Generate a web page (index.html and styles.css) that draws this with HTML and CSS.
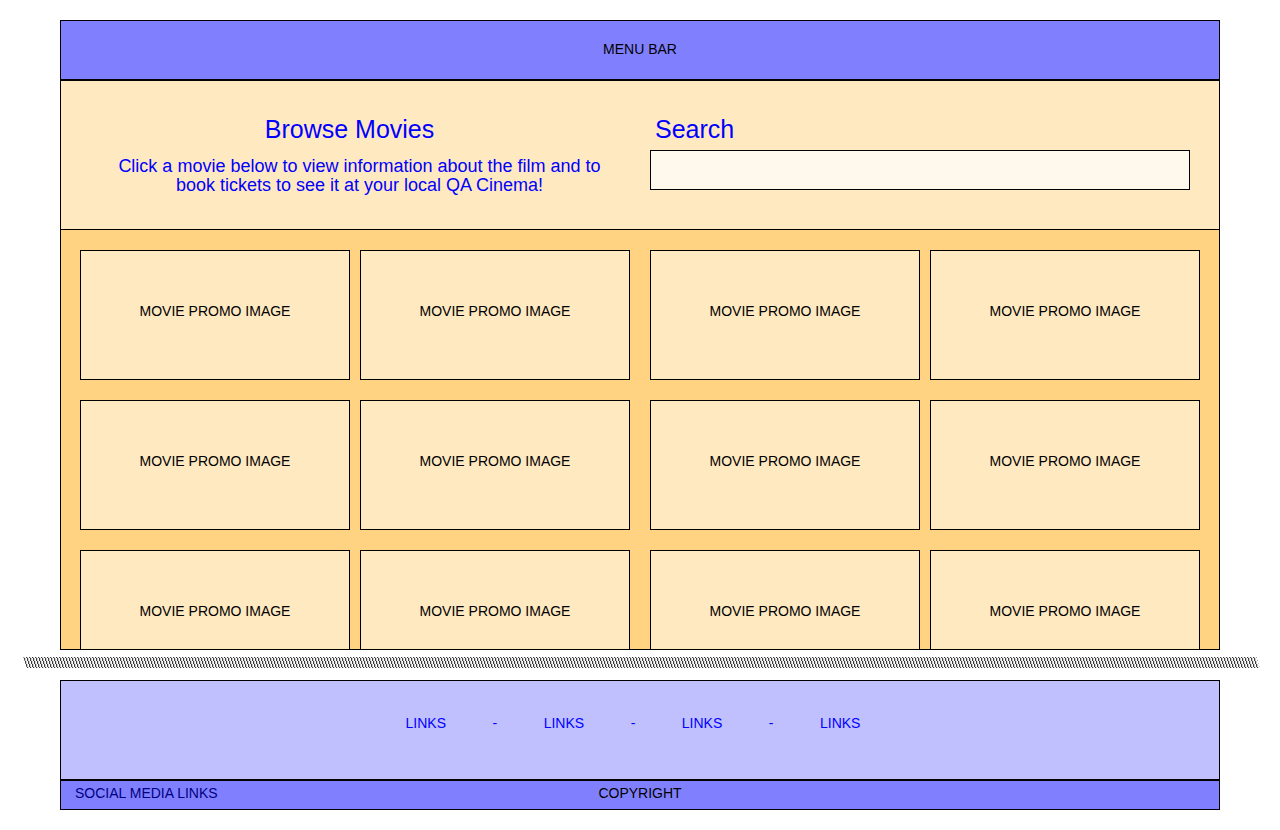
FILE: index.html
```html
<!DOCTYPE html>
<html>
<head>
<meta charset="utf-8">
<title>Browse Movies</title>
<link rel="stylesheet" href="styles.css">
</head>
<body>
<div class="page">
  <div class="menu-bar">MENU BAR</div>
  <div class="header">
    <div class="browse">
      <h1 class="browse-title">Browse Movies</h1>
      <p class="browse-text">Click a movie below to view information about the film and to<br>book tickets to see it at your local QA Cinema!</p>
    </div>
    <div class="search">
      <h2 class="search-title">Search</h2>
      <div class="search-box"></div>
    </div>
  </div>
  <div class="movies">
    <div class="movie-grid">
      <div class="card">MOVIE PROMO IMAGE</div>
      <div class="card">MOVIE PROMO IMAGE</div>
      <div class="card">MOVIE PROMO IMAGE</div>
      <div class="card">MOVIE PROMO IMAGE</div>
      <div class="card">MOVIE PROMO IMAGE</div>
      <div class="card">MOVIE PROMO IMAGE</div>
      <div class="card">MOVIE PROMO IMAGE</div>
      <div class="card">MOVIE PROMO IMAGE</div>
      <div class="card">MOVIE PROMO IMAGE</div>
      <div class="card">MOVIE PROMO IMAGE</div>
      <div class="card">MOVIE PROMO IMAGE</div>
      <div class="card">MOVIE PROMO IMAGE</div>
    </div>
  </div>
  <div class="page-break"><div class="zigzag"></div></div>
  <div class="footer-links">
    <span class="link">LINKS</span><span class="sep">-</span>
    <span class="link">LINKS</span><span class="sep">-</span>
    <span class="link">LINKS</span><span class="sep">-</span>
    <span class="link">LINKS</span>
  </div>
  <div class="footer-bar">
    <span class="social">SOCIAL MEDIA LINKS</span>
    <span class="copyright">COPYRIGHT</span>
  </div>
</div>
</body>
</html>
```
FILE: styles.css
```css
html, body {
  margin: 0;
  padding: 0;
  background: #ffffff;
}

body {
  font-family: "Liberation Sans", Arial, sans-serif;
  font-size: 14px;
  color: #000000;
}

.page {
  width: 1160px;
  margin: 20px 0 0 60px;
}

.menu-bar {
  box-sizing: border-box;
  height: 61px;
  border: 1px solid #000;
  border-bottom-width: 2px;
  background: #8080ff;
  display: flex;
  align-items: center;
  justify-content: center;
  padding-bottom: 2px;
}

.header {
  box-sizing: border-box;
  height: 149px;
  border-left: 1px solid #000;
  border-right: 1px solid #000;
  border-bottom: 1px solid #000;
  background: #ffe9c1;
  display: flex;
  padding-top: 33px;
}

.browse {
  width: 577px;
  color: #0000ff;
}

.browse-title {
  margin: 0;
  font-size: 25px;
  font-weight: normal;
  line-height: 30px;
  text-align: center;
}

.browse-text {
  margin: 13px 0 0 0;
  padding-left: 20px;
  font-size: 18px;
  line-height: 19px;
  text-align: center;
}

.search {
  padding-left: 12px;
  color: #0000ff;
}

.search-title {
  margin: 0 0 0 5px;
  font-size: 25px;
  font-weight: normal;
  line-height: 30px;
}

.search-box {
  box-sizing: border-box;
  margin-top: 6px;
  width: 540px;
  height: 40px;
  border: 1px solid #000;
  background: #fff8ec;
}

.movies {
  box-sizing: border-box;
  height: 420px;
  border-left: 1px solid #000;
  border-right: 1px solid #000;
  border-bottom: 1px solid #000;
  background: #ffd382;
  padding: 20px 19px 0 19px;
  overflow: hidden;
}

.movie-grid {
  display: grid;
  grid-template-columns: 270px 270px 280px 270px;
  grid-auto-rows: 130px;
  column-gap: 10px;
  row-gap: 20px;
}

.card {
  box-sizing: border-box;
  width: 270px;
  border: 1px solid #000;
  background: #ffe9c1;
  display: flex;
  align-items: center;
  justify-content: center;
  padding-bottom: 8px;
}

.card:nth-child(4n+3) {
  justify-self: end;
}

.page-break {
  height: 30px;
  margin-left: -35px;
  width: 1233px;
  padding-top: 7px;
  box-sizing: border-box;
}

.zigzag {
  height: 11px;
  background: repeating-linear-gradient(90deg, #3c3c3c 0 1px, rgba(60,60,60,0.25) 1px 2px, transparent 2px 3px);
  transform: skewX(17deg);
}

.footer-links {
  box-sizing: border-box;
  height: 101px;
  border: 1px solid #000;
  border-bottom-width: 2px;
  background: #c0c0ff;
  color: #0000ff;
  display: flex;
  justify-content: center;
  align-items: center;
  padding-bottom: 14px;
  padding-right: 14px;
  gap: 46.5px;
}

.footer-bar {
  box-sizing: border-box;
  height: 29px;
  border-left: 1px solid #000;
  border-right: 1px solid #000;
  border-bottom: 1px solid #000;
  background: #8080ff;
  display: flex;
  align-items: center;
  padding-left: 14px;
  padding-bottom: 5px;
  position: relative;
}

.social {
  color: #000080;
}

.copyright {
  position: absolute;
  left: 0;
  right: 0;
  text-align: center;
  color: #000;
}
```
